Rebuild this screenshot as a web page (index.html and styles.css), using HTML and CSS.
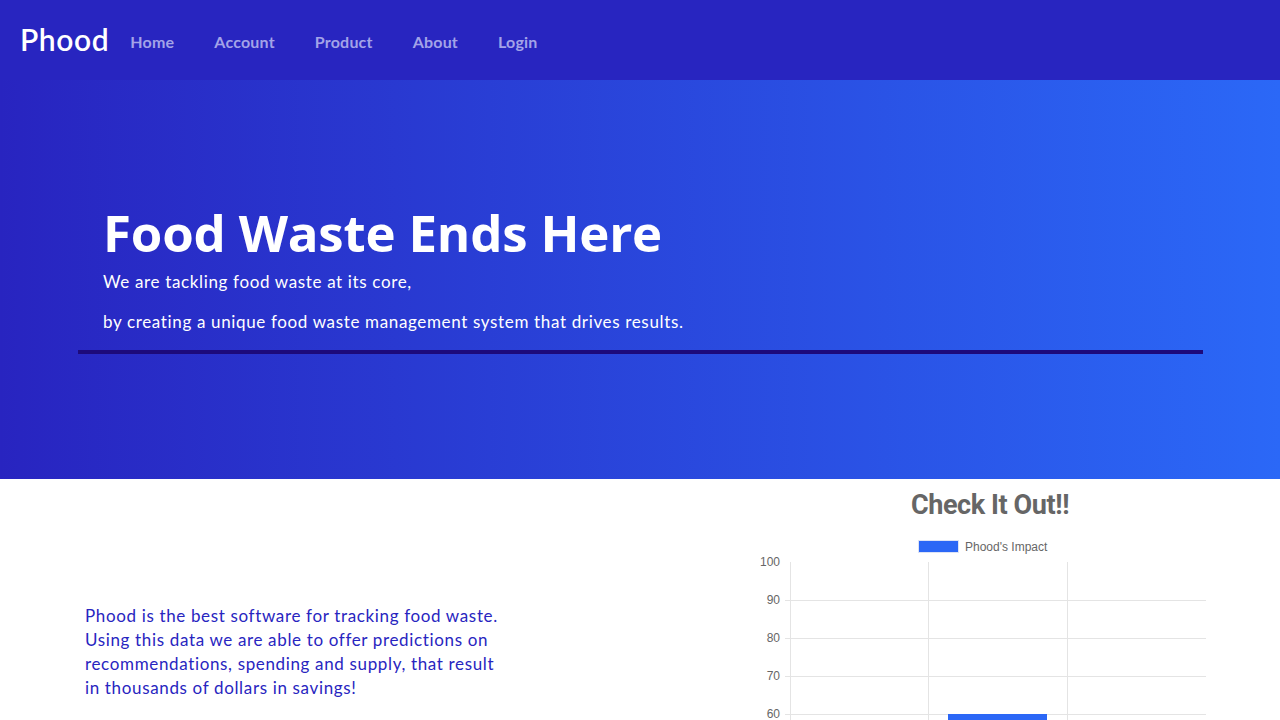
FILE: index.html
```html
<!DOCTYPE html>
<html lang="en">
<head>
<meta charset="utf-8">
<title>Phood</title>
<link rel="stylesheet" href="styles.css">
</head>
<body>
<header class="navbar">
  <a class="brand" href="#">Phood</a>
  <nav class="nav">
    <a class="nav-link" href="#">Home</a>
    <a class="nav-link" href="#">Account</a>
    <a class="nav-link" href="#">Product</a>
    <a class="nav-link" href="#">About</a>
    <a class="nav-link" href="#">Login</a>
  </nav>
</header>
<section class="hero">
  <div class="hero-inner">
    <h1 class="hero-title">Food Waste Ends Here</h1>
    <p class="hero-sub">We are tackling food waste at its core,</p>
    <p class="hero-sub">by creating a unique food waste management system that drives results.</p>
  </div>
  <hr class="hero-rule">
</section>
<section class="info">
  <div class="info-text">
    <p>Phood is the best software for tracking food waste. Using this data we are able to offer predictions on recommendations, spending and supply, that result in thousands of dollars in savings!</p>
  </div>
  <div class="info-chart">
    <h2 class="chart-title">Check It Out!!</h2>
    <svg class="chart" width="480" height="200" viewBox="0 0 480 200">
      <g class="legend">
        <rect x="168.5" y="0.5" width="40" height="12" fill="#2b67f6" stroke="#dde3f5" stroke-width="1"/>
        <text x="215" y="11" class="legend-text">Phood's Impact</text>
      </g>
      <g class="grid" stroke="#e4e4e4" stroke-width="1">
        <line x1="40.5" y1="22" x2="40.5" y2="200"/>
        <line x1="178.5" y1="22" x2="178.5" y2="200"/>
        <line x1="317.5" y1="22" x2="317.5" y2="200"/>
        <line x1="35" y1="60.5" x2="456" y2="60.5"/>
        <line x1="35" y1="98.5" x2="456" y2="98.5"/>
        <line x1="35" y1="136.5" x2="456" y2="136.5"/>
        <line x1="35" y1="174.5" x2="456" y2="174.5"/>
      </g>
      <g class="ticks">
        <text x="30" y="26" text-anchor="end">100</text>
        <text x="30" y="64" text-anchor="end">90</text>
        <text x="30" y="102" text-anchor="end">80</text>
        <text x="30" y="140" text-anchor="end">70</text>
        <text x="30" y="178" text-anchor="end">60</text>
      </g>
      <rect x="198" y="174" width="99" height="30" fill="#2b67f6"/>
    </svg>
  </div>
</section>
</body>
</html>
```

FILE: styles.css
```css
* { box-sizing: border-box; }
html, body { margin: 0; padding: 0; }
body {
  font-family: Lato, "Noto Sans", sans-serif;
  background: #ffffff;
  overflow: hidden;
  height: 720px;
}
.navbar {
  height: 80px;
  background: #2825c0;
  display: flex;
  align-items: center;
  padding: 0 0 0 20px;
}
.brand {
  color: #ffffff;
  text-decoration: none;
  font-family: Lato, sans-serif;
  font-size: 30px;
  font-weight: 600;
  letter-spacing: 0.6px;
  margin-right: 1px;
  line-height: 1;
  padding-bottom: 2px;
}
.nav { display: flex; padding-top: 2px; }
.nav-link {
  color: #a3a3e8;
  text-decoration: none;
  font-size: 16px;
  font-weight: 700;
  padding: 0 20px;
  letter-spacing: 0.2px;
}
.hero {
  height: 399px;
  background: linear-gradient(90deg, #2824c0 0%, #2b68f7 100%);
  padding-top: 122px;
}
.hero-inner { padding-left: 103px; }
.hero-title {
  margin: 0;
  color: #ffffff;
  font-family: "Open Sans", sans-serif;
  font-weight: 700;
  font-size: 51px;
  line-height: 60px;
  letter-spacing: -0.2px;
}
.hero-sub {
  margin: 10px 0 0 0;
  color: #ffffff;
  font-size: 17px;
  line-height: 20px;
  letter-spacing: 0.65px;
}
.hero-sub + .hero-sub { margin-top: 20px; }
.hero-rule {
  margin: 18px 77px 0 78px;
  border: 0;
  height: 4px;
  background: #1d0a7b;
}
.info {
  display: flex;
  justify-content: space-between;
}
.info-text {
  width: 422px;
  margin-left: 85px;
  padding-top: 125px;
}
.info-text p {
  margin: 0;
  color: #2825c0;
  font-size: 17px;
  line-height: 24px;
  letter-spacing: 0.65px;
}
.info-chart {
  width: 480px;
  margin-right: 50px;
  display: flex;
  flex-direction: column;
  align-items: center;
}
.chart-title {
  margin: 10px 0 0 0;
  font-family: Roboto, sans-serif;
  font-weight: 700;
  font-size: 27px;
  line-height: 32px;
  color: #666666;
  letter-spacing: -0.4px;
}
.chart {
  display: block;
  margin-top: 19px;
  font-family: "Liberation Sans", Arial, sans-serif;
  font-size: 12px;
  fill: #666666;
}
.legend-text, .ticks text { fill: #666666; font-size: 12px; }
```
